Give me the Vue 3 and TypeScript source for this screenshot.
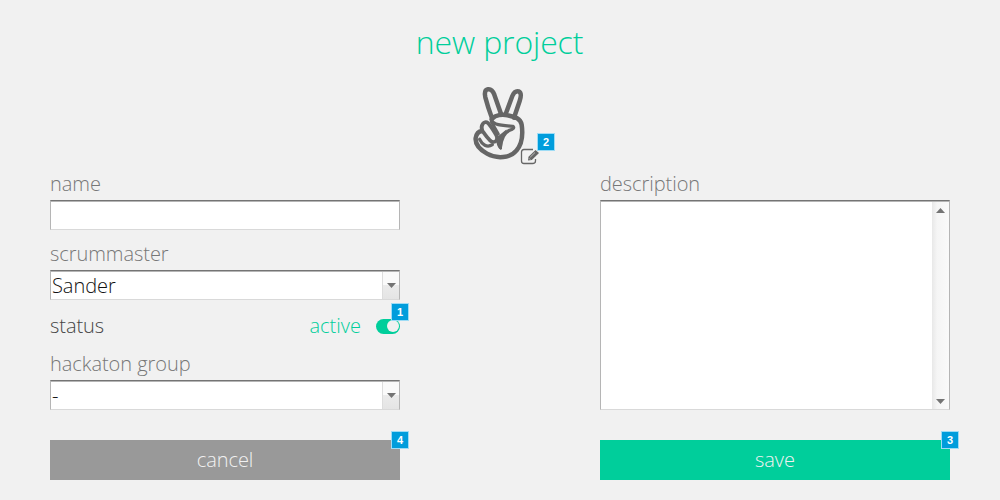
<script setup lang="ts">
import { ref } from 'vue'

const name = ref('')
const description = ref('')
const scrummaster = ref('Sander')
const group = ref('-')
</script>

<template>
  <main class="page">
    <h1>new project</h1>
    <div class="logo">
      <svg class="hand" viewBox="0 0 300 270" fill="none" stroke="#666" stroke-width="13.500" stroke-linecap="round" stroke-linejoin="round">
        <path d="M80 112 Q69 82 61 52 Q56 30 69 28 Q81 26 88 44 L109 104" />
        <path d="M122 102 L142 48 Q149 31 161 34 Q172 39 164 63 L147 113" />
        <path d="M82 116 C91 105 112 102 128 106 C150 111 166 114 170 134 C174 162 170 194 154 212 C136 234 96 238 66 221 C45 209 30 194 32 174 C34 162 41 154 51 153" />
        <path d="M52 153 C45 137 57 120 69 129 C79 140 86 153 94 166 C101 180 91 190 79 184 C68 177 61 163 52 153" stroke-width="11" />
        <path d="M44 178 C51 193 66 205 82 194" stroke-width="10" />
        <path d="M78 118 C83 131 92 135 143 139 C149 142 146 148 133 151 C118 157 110 170 106 202" stroke-width="10" />
        <path d="M79 125 L100 162" stroke-width="9" />
        <path d="M107 210 C94 199 91 183 99 169 L125 148 C114 168 111 185 111 207Z" fill="#666" stroke="none" />
      </svg>
      <svg class="edit" viewBox="0 0 20 18" fill="none" stroke="#666">
        <path d="M13 2.500H4Q1.500 2.500 1.500 5V14Q1.500 16.500 4 16.500H12.500Q15.500 16.500 15.500 14V12" stroke-width="1.3" />
        <path d="M8 13.500 L8.500 9.800 L15.500 3 L19 6 L11.800 13Z" fill="#666" stroke="none" />
        <path d="M10.200 10.200 L15 5.500 M9 11.300 L10.300 12.600" stroke="#ddd" stroke-width=".7" />
      </svg>
      <b class="badge">2</b>
    </div>
    <form class="form" @submit.prevent>
      <section class="column">
        <label>name</label>
        <input v-model="name" class="field" aria-label="name" />
        <label>scrummaster</label>
        <div class="field select"><span>{{ scrummaster }}</span><i class="drop"><i class="down" /></i></div>
        <div class="status"><span>status</span><span class="active">active</span><span class="toggle"><i /><b class="badge">1</b></span></div>
        <label>hackaton group</label>
        <div class="field select"><span>{{ group }}</span><i class="drop"><i class="down" /></i></div>
        <button class="cancel" type="button">cancel<b class="badge">4</b></button>
      </section>
      <section class="column">
        <label>description</label>
        <div class="field area"><textarea v-model="description" aria-label="description" /><div class="scroll"><i class="up" /><i class="down" /></div></div>
        <button class="save">save<b class="badge">3</b></button>
      </section>
    </form>
  </main>
</template>

<style>
body { margin: 0; background: #f1f1f1; }
</style>

<style scoped>
* { box-sizing: border-box; }
.page { width: 1000px; height: 500px; background: #f1f1f1; font: 300 20px/28px "Open Sans", sans-serif; letter-spacing: -0.05px; color: #777; overflow: hidden; }
h1 { margin: 0; padding: 20px 1px 0 0; height: 80px; font-size: 32px; font-weight: 300; line-height: 44px; letter-spacing: -0.12px; text-align: center; color: #00ce9b; }
.logo { position: relative; width: 100px; height: 90px; margin-left: 465px; }
.hand { display: block; width: 100px; height: 90px; }
.edit { position: absolute; left: 55px; top: 67px; width: 20px; height: 18px; }
.badge { position: absolute; width: 18px; height: 18px; border: 1px solid #9edcf5; background: #009ddc; color: #fff; font: bold 11px/16px "Liberation Sans", sans-serif; text-align: center; }
.logo .badge { left: 72px; top: 53px; }
.form { display: flex; gap: 200px; margin-left: 50px; }
.column { width: 350px; display: flex; flex-direction: column; }
label { display: block; height: 30px; line-height: 28px; }
.field { display: block; width: 350px; height: 30px; margin: 0 0 10px; border: 1px solid #b5b5b5; border-top-color: #747474; border-bottom-color: #d9d9d9; border-radius: 0; background: #fff; box-shadow: inset 0 1px #b5b5b5; outline: 0; }
.select { display: flex; justify-content: space-between; color: #111; line-height: 30px; padding-left: 1px; }
.drop { display: flex; align-items: center; justify-content: center; width: 17px; height: 27px; margin-top: 1px; border-left: 1px solid #ddd; background: linear-gradient(#fafafa 50%, #ebebeb 50%, #e4e4e4); }
.down, .up { width: 9px; height: 5px; background: #747474; }
.down { clip-path: polygon(0 0, 100% 0, 50% 100%); }
.up { clip-path: polygon(0 100%, 100% 100%, 50% 0); }
.drop .down { margin-left: 1px; }
.status { display: flex; align-items: center; height: 30px; margin: 1px 0 9px; color: #444; }
.active { margin-left: auto; margin-right: 15px; letter-spacing: 0; color: #00ce9b; }
.toggle { position: relative; width: 24px; height: 15px; border-radius: 8px; background: #00ce9b; }
.toggle i { display: block; width: 12px; height: 12px; margin: 1.500px 0 0 10.500px; border-radius: 50%; background: #f1f1f1; }
.toggle .badge { left: 15px; top: -16px; }
button { position: relative; width: 350px; height: 40px; margin: 20px 0 0; padding: 0; border: 0; font: inherit; line-height: 40px; letter-spacing: -0.05px; color: #f1f1f1; }
.cancel { background: #999; }
.save { background: #00ce9b; }
button .badge { left: 341px; top: -9px; }
.area { display: flex; height: 210px; padding-top: 1px; }
textarea { flex: 1; border: 0; padding: 2px; resize: none; outline: 0; font: inherit; overflow: hidden; }
.scroll { display: flex; flex-direction: column; align-items: center; justify-content: space-between; width: 17px; padding: 6px 0 5px; background: linear-gradient(90deg, #e8e8e8, #f5f5f5 30%, #fafafa); }
</style>
